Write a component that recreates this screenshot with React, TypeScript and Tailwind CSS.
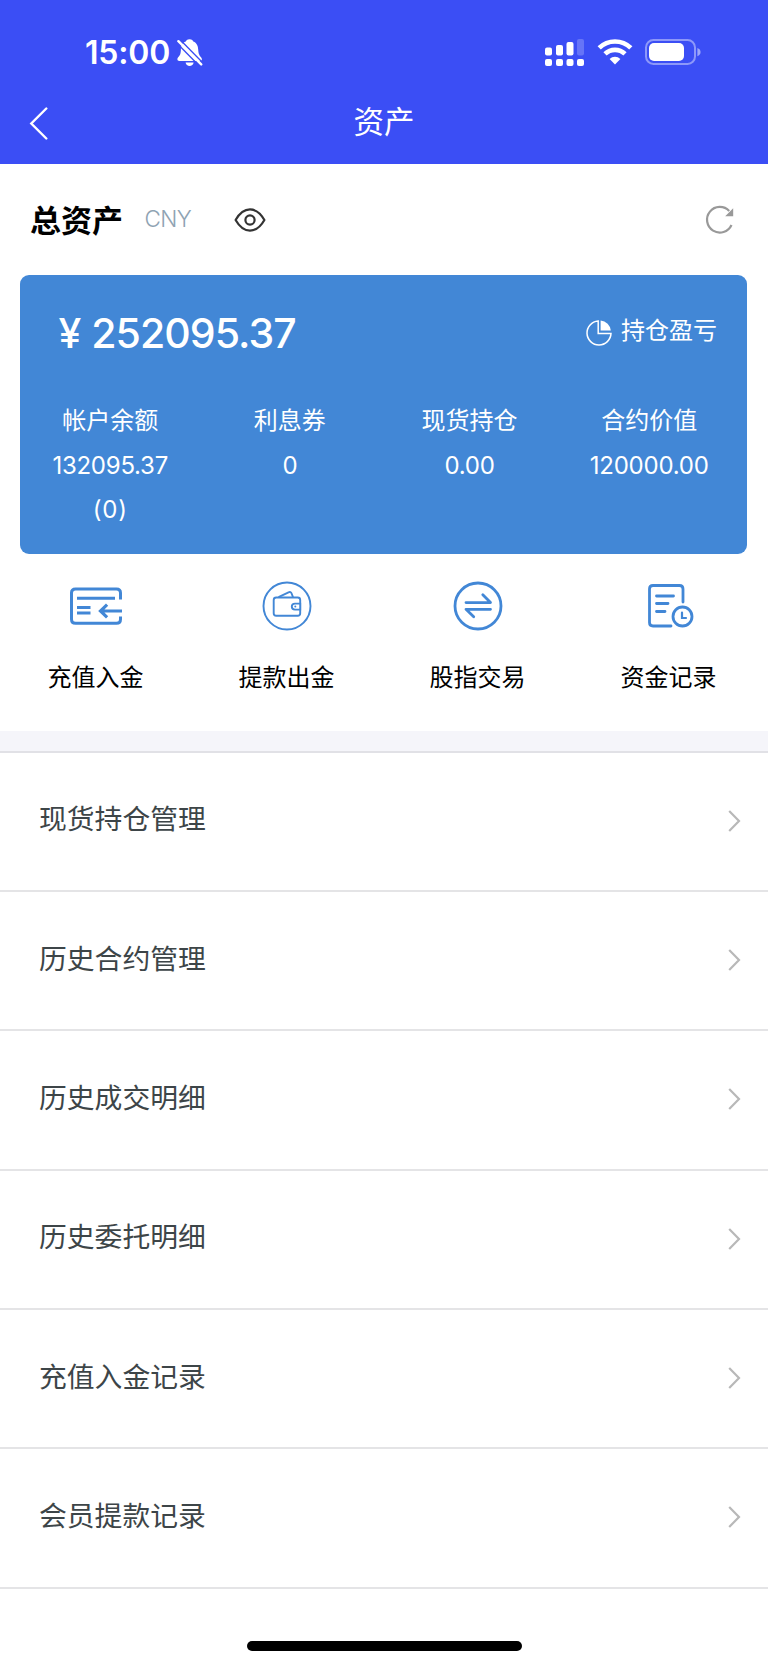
import React from 'react';

const SignalIcon: React.FC = () => (
    <svg width="40" height="28" viewBox="0 0 40 28" fill="#fff">
        <rect x="0" y="8.5" width="7" height="8" rx="2" />
        <rect x="11" y="6" width="7" height="10.5" rx="2" />
        <rect x="21.5" y="3" width="7" height="13.5" rx="2" />
        <rect x="32" y="0" width="7" height="16.5" rx="2" opacity="0.22" />
        <rect x="0" y="20" width="7" height="7" rx="2" />
        <rect x="11" y="20" width="7" height="7" rx="2" />
        <rect x="21.5" y="20" width="7" height="7" rx="2" />
        <rect x="32" y="20" width="7" height="7" rx="2" />
    </svg>
);

const WifiIcon: React.FC = () => (
    <svg width="36" height="26" viewBox="0 0 36 26" fill="none" stroke="#fff" strokeWidth="4.6">
        <path d="M2.2 8.9 A22.6 22.6 0 0 1 33.8 8.9" />
        <path d="M8 14.9 A14.4 14.4 0 0 1 28 14.9" />
        <path d="M12.6 19.9 A8 8 0 0 1 23.4 19.9 L18 25.4 Z" fill="#fff" stroke="none" />
    </svg>
);

const BatteryIcon: React.FC = () => (
    <svg width="57" height="27" viewBox="0 0 57 27">
        <rect x="1" y="1" width="49" height="24" rx="7.5" fill="none" stroke="#fff" strokeOpacity="0.42" strokeWidth="2" />
        <rect x="4" y="4" width="35" height="18" rx="5" fill="#fff" />
        <path d="M52.4 9 C56.6 10.2 56.6 16 52.4 17.2 Z" fill="#fff" fillOpacity="0.5" />
    </svg>
);

const BellOffIcon: React.FC = () => (
    <svg width="26" height="28" viewBox="0 0 26 28">
        <path
            d="M12.5 0.3 C14.9 0.3 15.9 1.6 16.3 2.6 C19.8 4 21 7 21.2 10.4 C21.4 14.8 22.4 16.3 24.2 18.4 C25.6 20.2 24.8 22 22.8 22 H2.4 C0.4 22 -0.2 20.2 1 18.6 C2.9 16.3 3.8 14.8 3.9 10.4 C4.1 7 5.2 4 8.8 2.6 C9.2 1.6 10.2 0.3 12.5 0.3 Z"
            fill="#fff"
        />
        <path d="M8.6 23.6 H16.6 C16.2 28.2 9 28.2 8.6 23.6 Z" fill="#fff" />
        <path d="M-0.6 3.6 L22.6 27.2" stroke="#3b4ef5" strokeWidth="1.4" />
        <path d="M2.8 0.4 L26 24" stroke="#3b4ef5" strokeWidth="1.4" />
        <path d="M1.4 2.2 L24.2 25.4" stroke="#fff" strokeWidth="2.4" strokeLinecap="round" />
    </svg>
);

const EyeIcon: React.FC = () => (
    <svg width="32" height="24" viewBox="0 0 32 24" fill="none" stroke="#333" strokeWidth="2.2">
        <path d="M1.6 12 C5.5 5.2 10.5 1.4 16 1.4 C21.5 1.4 26.5 5.2 30.4 12 C26.5 18.8 21.5 22.6 16 22.6 C10.5 22.6 5.5 18.8 1.6 12 Z" strokeLinejoin="round" />
        <circle cx="16" cy="12" r="4.6" />
    </svg>
);

const RefreshIcon: React.FC = () => (
    <svg width="30" height="30" viewBox="0 0 30 30">
        <path d="M26.5 20 A12.8 12.8 0 1 1 24.2 6" fill="none" stroke="#999" strokeWidth="2.2" />
        <path d="M28.2 3.2 V11.2 H20.2 Z" fill="#999" />
    </svg>
);

const PieIcon: React.FC = () => (
    <svg width="26" height="26" viewBox="0 0 26 26">
        <path d="M12.2 1 A12 12 0 1 0 25 13.4 H12.2 Z" fill="none" stroke="#fff" strokeWidth="1.5" />
        <path d="M14.6 0.6 A10.8 10.8 0 0 1 24.8 10.6 H14.6 Z" fill="#fff" />
    </svg>
);

const DepositIcon: React.FC = () => (
    <svg width="54" height="50" viewBox="0 0 54 50" fill="none" stroke="#4287d6" strokeWidth="3">
        <path d="M51.5 18.5 V12 Q51.5 8 47.5 8 H6.5 Q2.5 8 2.500 12 V38.3 Q2.5 42.3 6.5 42.3 H47.5 Q51.5 42.3 51.5 38.3 V35.500" />
        <path d="M8 17.2 H46 M8 26.500 H21.5 M8 32 H21.5" />
        <path d="M53 30 H32 M38.1 23.7 L31.5 30 L38.1 36.3" strokeWidth="3.2" />
    </svg>
);

const WithdrawIcon: React.FC = () => (
    <svg width="50" height="50" viewBox="0 0 50 50" fill="none" stroke="#4287d6" strokeWidth="1.9">
        <circle cx="25" cy="25" r="23.5" />
        <rect x="11.7" y="16.5" width="26.5" height="18.3" rx="2.5" />
        <path d="M16.5 16.2 L26.5 11.3 Q28.8 10.4 29.6 12.5 L31 16.2" />
        <path d="M38.2 22.6 H33 Q29.8 22.6 29.8 25.6 Q29.8 28.6 33 28.6 H38.2 Z" fill="#fff" />
        <circle cx="33.3" cy="25.6" r="1" fill="#4287d6" stroke="none" />
    </svg>
);

const TradeIcon: React.FC = () => (
    <svg width="50" height="50" viewBox="0 0 50 50" fill="none" stroke="#4287d6" strokeWidth="2.8" strokeLinecap="round" strokeLinejoin="round">
        <circle cx="25" cy="25" r="23" />
        <path d="M13 21.6 H37.5 L29.8 13.8" />
        <path d="M37.5 28.3 H13 L20.7 35.8" />
    </svg>
);

const RecordIcon: React.FC = () => (
    <svg width="50" height="50" viewBox="0 0 50 50" fill="none" stroke="#4287d6" strokeWidth="2.8" strokeLinecap="round">
        <path d="M39 21 V8 Q39 4.5 35.5 4.5 H9 Q5.5 4.5 5.5 8 V41.5 Q5.5 45 9 45 H27" />
        <path d="M12.5 15 H29.5 M12.5 22.5 H24 M12.5 30.5 H21" />
        <circle cx="38.5" cy="35.5" r="9.5" />
        <path d="M38 31.5 V37 H42" strokeWidth="2.2" />
    </svg>
);

const balances = [
    { label: '帐户余额', value: '132095.37', extra: '(0)' },
    { label: '利息券', value: '0' },
    { label: '现货持仓', value: '0.00' },
    { label: '合约价值', value: '120000.00' }
];

const actions = [
    { label: '充值入金', icon: <DepositIcon /> },
    { label: '提款出金', icon: <WithdrawIcon /> },
    { label: '股指交易', icon: <TradeIcon /> },
    { label: '资金记录', icon: <RecordIcon /> }
];

const menuItems = ['现货持仓管理', '历史合约管理', '历史成交明细', '历史委托明细', '充值入金记录', '会员提款记录'];

const MenuRow: React.FC<{ label: string }> = ({ label }) => (
    <li className="flex h-[139.35px] items-center justify-between border-b-2 border-[#e4e4e6] pr-[27px] pl-[39px]">
        <span className="pb-[4px] text-[27.8px] leading-10 text-[#3d4548]">{label}</span>
        <svg className="mb-px" width="13" height="24" viewBox="0 0 13 24" fill="none" stroke="#b8b8b8" strokeWidth="2.2">
            <path d="M1.2 2 L11 12 L1.2 22" />
        </svg>
    </li>
);

const App: React.FC = () => (
    <div className="flex h-[1665px] w-[768px] flex-col overflow-hidden bg-white font-['Inter','Noto_Sans_CJK_SC',sans-serif] text-black">
        <header className="h-[164px] shrink-0 bg-[#3b4ef5] text-white">
            <div className="flex h-[82px] items-start justify-between pt-[39px] pr-[66px] pl-[85px]">
                <div className="flex items-start gap-[7px]">
                    <span className="-mt-px w-[85px] text-[32px] leading-[29px] font-semibold tracking-[-0.2px]">15:00</span>
                    <BellOffIcon />
                </div>
                <div className="flex items-start">
                    <SignalIcon />
                    <span className="ml-[12px]"><WifiIcon /></span>
                    <span className="ml-[12px]"><BatteryIcon /></span>
                </div>
            </div>
            <div className="grid h-[82px] grid-cols-[1fr_auto_1fr] items-center pl-[29px]">
                <svg width="20" height="34" viewBox="0 0 20 34" fill="none" stroke="#fff" strokeWidth="2.4" strokeLinecap="round">
                    <path d="M17.3 2.5 L2.3 17.5 L17.3 32.5" />
                </svg>
                <h1 className="mr-[29px] pb-[2px] text-[30.5px] leading-10">资产</h1>
            </div>
        </header>

        <section className="flex h-[111px] shrink-0 items-center pr-[33px] pl-[30px]">
            <h2 className="pt-[2px] text-[31px] leading-10 font-bold">总资产</h2>
            <span className="ml-[21.5px] w-[69px] pb-[1px] text-[22.5px] leading-8 font-light tracking-[-0.6px] text-[#8fa3b3]">CNY</span>
            <span className="ml-[20.5px]"><EyeIcon /></span>
            <span className="ml-auto"><RefreshIcon /></span>
        </section>

        <section className="mr-[21px] ml-[20.4px] h-[279px] shrink-0 rounded-[9px] bg-[#4287d6] text-white">
            <div className="flex h-[116px] items-center justify-between pr-[30px] pl-[38px]">
                <p className="flex items-center gap-[11px] text-[41px] leading-[50px] font-medium tracking-[-0.95px]">
                    <span>¥</span>
                    <span>252095.37</span>
                </p>
                <div className="flex items-center gap-[9px]">
                    <PieIcon />
                    <span className="pb-[4px] text-[24px] leading-9">持仓盈亏</span>
                </div>
            </div>
            <div className="grid grid-cols-4 pt-[8px] pr-[8px] text-center text-[24px] leading-[44.5px]">
                {balances.map((item) => (
                    <div key={item.label}>
                        <p>{item.label}</p>
                        <p className="tracking-[-0.25px]">{item.value}</p>
                        {item.extra && <p className="tracking-[0.8px]">{item.extra}</p>}
                    </div>
                ))}
            </div>
        </section>

        <section className="grid h-[177px] shrink-0 grid-cols-4 pt-[26.5px] pr-[4px]">
            {actions.map((item) => (
                <div key={item.label} className="flex flex-col items-center">
                    {item.icon}
                    <span className="mt-[29.5px] text-[24px] leading-9">{item.label}</span>
                </div>
            ))}
        </section>

        <div className="h-[21.5px] shrink-0 border-b-2 border-[#e1e1e6] bg-[#f5f5fa]" />

        <ul className="shrink-0">
            {menuItems.map((label) => (
                <MenuRow key={label} label={label} />
            ))}
        </ul>

        <div className="mt-auto mb-[14px] flex justify-center">
            <div className="h-[10px] w-[275px] rounded-full bg-black" />
        </div>
    </div>
);

export default App;
